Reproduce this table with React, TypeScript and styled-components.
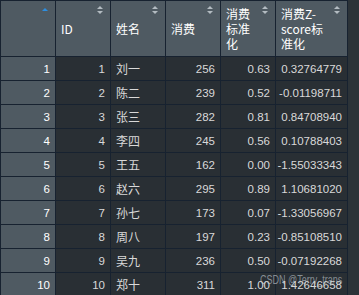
import React from 'react';
import styled, { createGlobalStyle } from 'styled-components';

const GlobalStyle = createGlobalStyle`
  html, body {
    margin: 0;
    padding: 0;
    background: #2c3338;
    overflow: hidden;
  }
  body {
    font-family: "Liberation Sans", "Noto Sans CJK SC", sans-serif;
    font-size: 11px;
  }
`;

const rows = [
  ['刘一', '256', '0.63', '0.32764779'],
  ['陈二', '239', '0.52', '-0.01198711'],
  ['张三', '282', '0.81', '0.84708940'],
  ['李四', '245', '0.56', '0.10788403'],
  ['王五', '162', '0.00', '-1.55033343'],
  ['赵六', '295', '0.89', '1.10681020'],
  ['孙七', '173', '0.07', '-1.33056967'],
  ['周八', '197', '0.23', '-0.85108510'],
  ['吴九', '236', '0.50', '-0.07192268'],
  ['郑十', '311', '1.00', '1.42646658'],
];

const Page = styled.div`
  position: relative;
  width: 359px;
  height: 295px;
  overflow: hidden;
`;

const Grid = styled.div`
  display: grid;
  grid-template-columns: 54px 54px 54px 54px 54px 71px;
  grid-auto-rows: 23px;
  grid-template-rows: 55px;
  gap: 1px;
  padding: 1px;
  width: 348px;
  box-sizing: border-box;
  background: #172230;
`;

const HeadCell = styled.div`
  display: flex;
  align-items: center;
  padding: 0 0 0 5px;
  background: #4f5a62;
  color: #ffffff;
  font-family: "Noto Sans CJK SC", "Liberation Sans", sans-serif;
  font-size: 12px;
  line-height: 15px;
`;

const HeadText = styled.div`
  flex: 1;
  min-width: 0;
  overflow-wrap: break-word;
  padding-right: 4px;
`;

const SortBox = styled.div<{ $active?: boolean }>`
  align-self: flex-start;
  display: flex;
  flex-direction: column;
  gap: 2px;
  margin-top: ${(p) => (p.$active ? '7px' : '5px')};
  margin-right: 6px;
  width: 7px;
`;

const Arrow = styled.span<{ $down?: boolean; $color: string }>`
  width: 0;
  height: 0;
  border-left: 3.5px solid transparent;
  border-right: 3.5px solid transparent;
  ${(p) => (p.$down
    ? `border-top: 3px solid ${p.$color};`
    : `border-bottom: 3px solid ${p.$color};`)}
`;

const Cell = styled.div<{ $align?: 'left' | 'right'; $rowName?: boolean }>`
  display: flex;
  align-items: center;
  justify-content: ${(p) => (p.$align === 'left' ? 'flex-start' : 'flex-end')};
  padding: 0 5px;
  background: ${(p) => (p.$rowName ? '#4f5a62' : '#292f34')};
  color: ${(p) => (p.$rowName ? '#ffffff' : '#d9d9d9')};
  font-family: ${(p) => (p.$align === 'left'
    ? '"Noto Sans CJK SC", "Liberation Sans", sans-serif'
    : '"Liberation Sans", "Noto Sans CJK SC", sans-serif')};
  font-size: ${(p) => (p.$align === 'left' ? '12px' : '11.5px')};
  white-space: nowrap;
`;

const Watermark = styled.div`
  position: absolute;
  left: 260px;
  top: 273px;
  color: rgba(200, 206, 212, 0.6);
  font-family: "Liberation Sans", sans-serif;
  font-size: 12.5px;
  white-space: nowrap;
  transform: scaleX(0.72);
  transform-origin: left top;
`;

const Sort = ({ active }: { active?: boolean }) => (
  <SortBox $active={active}>
    {active ? (
      <Arrow $color="#2d8ee0" />
    ) : (
      <>
        <Arrow $color="#b4bcc2" />
        <Arrow $down $color="#b4bcc2" />
      </>
    )}
  </SortBox>
);

const headers = ['', 'ID', '姓名', '消费', '消费标准化', '消费Z-score标准化'];

export default function App() {
  return (
    <Page>
      <GlobalStyle />
      <Grid>
        {headers.map((h, i) => (
          <HeadCell key={`h${i}`}>
            <HeadText>{h}</HeadText>
            <Sort active={i === 0} />
          </HeadCell>
        ))}
        {rows.map((r, i) => (
          <React.Fragment key={`r${i}`}>
            <Cell $rowName>{i + 1}</Cell>
            <Cell>{i + 1}</Cell>
            <Cell $align="left">{r[0]}</Cell>
            <Cell>{r[1]}</Cell>
            <Cell>{r[2]}</Cell>
            <Cell>{r[3]}</Cell>
          </React.Fragment>
        ))}
      </Grid>
      <Watermark>CSDN @Terry_trans</Watermark>
    </Page>
  );
}
